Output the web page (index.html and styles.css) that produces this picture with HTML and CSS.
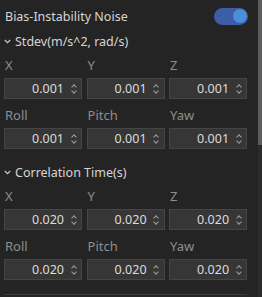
FILE: index.html
```html
<!DOCTYPE html>
<html lang="en">
<head>
  <meta charset="UTF-8">
  <title>Bias-Instability Noise</title>
  <link rel="stylesheet" href="styles.css">
</head>
<body>
  <div class="frame">
    <div class="panel">
      <div class="header">
        <span class="title">Bias-Instability Noise</span>
        <span class="toggle"><span class="knob"></span></span>
      </div>

      <div class="section">
        <svg class="chevron" width="7" height="5" viewBox="0 0 7 5"><path d="M0.8 1 L3.5 3.7 L6.2 1" fill="none" stroke="#c8c8c8" stroke-width="1.2"/></svg>
        <span>Stdev(m/s^2, rad/s)</span>
      </div>
      <div class="fields">
        <div class="field"><label>X</label><div class="input"><span>0.001</span><i class="spin"></i></div></div>
        <div class="field"><label>Y</label><div class="input"><span>0.001</span><i class="spin"></i></div></div>
        <div class="field"><label>Z</label><div class="input"><span>0.001</span><i class="spin"></i></div></div>
        <div class="field"><label>Roll</label><div class="input"><span>0.001</span><i class="spin"></i></div></div>
        <div class="field"><label>Pitch</label><div class="input"><span>0.001</span><i class="spin"></i></div></div>
        <div class="field"><label>Yaw</label><div class="input"><span>0.001</span><i class="spin"></i></div></div>
      </div>

      <div class="section second">
        <svg class="chevron" width="7" height="5" viewBox="0 0 7 5"><path d="M0.8 1 L3.5 3.7 L6.2 1" fill="none" stroke="#c8c8c8" stroke-width="1.2"/></svg>
        <span>Correlation Time(s)</span>
      </div>
      <div class="fields">
        <div class="field"><label>X</label><div class="input"><span>0.020</span><i class="spin"></i></div></div>
        <div class="field"><label>Y</label><div class="input"><span>0.020</span><i class="spin"></i></div></div>
        <div class="field"><label>Z</label><div class="input"><span>0.020</span><i class="spin"></i></div></div>
        <div class="field"><label>Roll</label><div class="input"><span>0.020</span><i class="spin"></i></div></div>
        <div class="field"><label>Pitch</label><div class="input"><span>0.020</span><i class="spin"></i></div></div>
        <div class="field"><label>Yaw</label><div class="input"><span>0.020</span><i class="spin"></i></div></div>
      </div>
      <div class="rule"></div>
    </div>
    <div class="scrollbar"><div class="thumb"></div></div>
    <div class="edge"></div>
  </div>
</body>
</html>
```

FILE: styles.css
```css
html, body { margin: 0; padding: 0; height: 100%; }
body { background: #242424; font-family: "Noto Sans", "Open Sans", sans-serif; overflow: hidden; }
.frame { display: flex; height: 297px; }
.panel { width: 246px; padding: 6px 5px 0 4px; }

.header { display: flex; align-items: center; justify-content: space-between; height: 20px; padding-left: 1px; }
.title { color: #d6d6d6; font-size: 12.5px; }
.toggle { width: 34px; height: 17px; border-radius: 9px; background: #3b5ea6; display: flex; align-items: center; justify-content: flex-end; padding-right: 1px; box-sizing: border-box; margin-right: -1px; }
.knob { width: 14px; height: 14px; border-radius: 50%; background: #4b8fd8; }

.section { display: flex; align-items: center; height: 20px; margin-top: 5px; color: #d6d6d6; font-size: 12.5px; }
.section.second { margin-top: 13px; }
.chevron { margin: 1px 4px 0 0; }

.fields { display: grid; grid-template-columns: repeat(3, 1fr); column-gap: 4.5px; row-gap: 8px; margin-top: 6px; }
.field label { display: block; height: 16px; line-height: 16px; color: #8e8e8e; font-size: 13px; padding-left: 1px; margin-bottom: 5px; }
.input { height: 21px; box-sizing: border-box; background: #363636; border: 1px solid #454545; display: flex; align-items: center; justify-content: flex-end; padding-right: 5px; color: #dcdcdc; font-size: 12.5px; }
.input span { margin-right: 7px; }
.spin { width: 5px; height: 10px; position: relative; }
.spin::before, .spin::after { content: ""; position: absolute; left: 0.5px; width: 3px; height: 3px; border: solid #9e9e9e; border-width: 1.3px 0 0 1.3px; }
.spin::before { top: 1px; transform: rotate(45deg); }
.spin::after { bottom: 1px; transform: rotate(225deg); }

.rule { height: 1px; background: #3a3a3a; margin-top: 14px; }

.scrollbar { width: 4px; margin-left: 6px; background: #2b2b2b; }
.thumb { height: 145px; background: #5c5c5c; }
.edge { flex: 1; background: linear-gradient(#1c1c1c 50%, #2e1e1e 50%); }
```
